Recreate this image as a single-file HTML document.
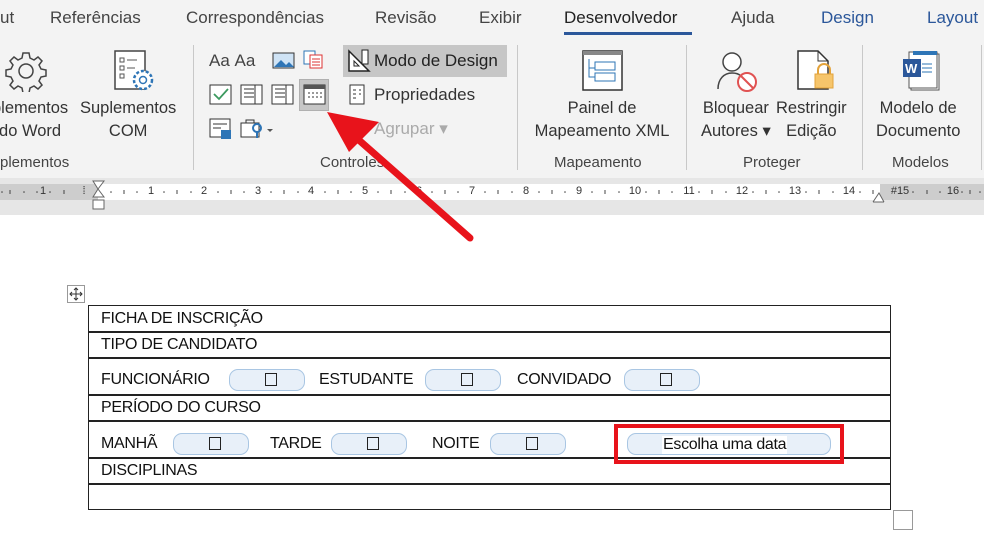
<!DOCTYPE html>
<html><head><meta charset="utf-8"><style>
*{margin:0;padding:0;box-sizing:border-box}
body{width:984px;height:552px;overflow:hidden;background:#fff;position:relative;font-family:"Liberation Sans",sans-serif;color:#333}
.a{position:absolute;white-space:nowrap}
.tab{top:8px;font-size:17px;color:#444}
.rb{font-size:16.5px;color:#333;text-align:center;line-height:23px}
.gl{top:154px;font-size:15px;color:#444}
.sep{position:absolute;top:45px;width:1px;height:125px;background:#c8c8c8}
.tx{font-size:16px;letter-spacing:-0.3px;color:#111}
.cc{position:absolute;height:22px;border:1px solid #a9c6e3;background:#e8f0f9;border-radius:9px}
.bx{position:absolute;width:12px;height:13px;border:1.5px solid #222}
.rn{position:absolute;top:185px;font-size:11px;color:#333;transform:translateX(-50%)}
</style></head><body>
<div class="a" style="left:0;top:0;width:984px;height:180px;background:#f3f3f3"></div>
<div class="a tab" style="left:0">ut</div>
<div class="a tab" style="left:50px">Referências</div>
<div class="a tab" style="left:186px">Correspondências</div>
<div class="a tab" style="left:375px">Revisão</div>
<div class="a tab" style="left:479px">Exibir</div>
<div class="a tab" style="left:564px;color:#222">Desenvolvedor</div>
<div class="a" style="left:564px;top:32px;width:128px;height:3px;background:#2b579a"></div>
<div class="a tab" style="left:731px">Ajuda</div>
<div class="a tab" style="left:821px;color:#2b579a">Design</div>
<div class="a tab" style="left:927px;color:#2b579a">Layout</div>

<svg class="a" style="left:5px;top:50px" width="42" height="42" viewBox="0 0 42 42"><path d="M18 3h6l1 5 4 2 4-3 4 4-3 4 2 4 5 1v6l-5 1-2 4 3 4-4 4-4-3-4 2-1 5h-6l-1-5-4-2-4 3-4-4 3-4-2-4-5-1v-6l5-1 2-4-3-4 4-4 4 3 4-2z" fill="none" stroke="#444" stroke-width="1.5"/><circle cx="21" cy="21" r="7" fill="none" stroke="#444" stroke-width="1.5"/></svg>
<div class="a rb" style="left:-8px;top:97px">plementos<br>do Word</div>
<svg class="a" style="left:113px;top:50px" width="44" height="44"><rect x="2" y="1" width="30" height="38" fill="#fff" stroke="#444" stroke-width="1.5"/><path d="M7 8h4v4H7zM7 16h4v4H7zM7 24h4v4H7zM14 10h10M14 18h8" stroke="#555" fill="none"/><circle cx="30" cy="30" r="9" fill="#fff" stroke="#2e75b6" stroke-width="2.5" stroke-dasharray="3 2"/><circle cx="30" cy="30" r="3.5" fill="none" stroke="#2e75b6" stroke-width="1.5"/></svg>
<div class="a rb" style="left:80px;top:97px">Suplementos<br>COM</div>
<div class="a gl" style="left:0">plementos</div>
<div class="sep" style="left:193px"></div>

<div class="a" style="left:209px;top:51px;font-size:17px;color:#444">Aa&nbsp;Aa</div>
<svg class="a" style="left:272px;top:51px" width="24" height="20"><rect x="1" y="2" width="21" height="15" fill="#cfe3f5" stroke="#333"/><path d="M2 16l7-7 5 5 3-3 5 5" fill="#2e75b6"/></svg>
<svg class="a" style="left:303px;top:50px" width="22" height="22"><rect x="1" y="1" width="11" height="13" fill="#fff" stroke="#2e75b6"/><rect x="7" y="5" width="12" height="13" fill="#fff" stroke="#d33"/><path d="M9 9h8M9 12h8M9 15h8" stroke="#d33"/></svg>
<svg class="a" style="left:209px;top:84px" width="24" height="22"><rect x="1" y="1" width="21" height="19" fill="#fff" stroke="#333"/><path d="M5 10l5 5 9-10" stroke="#3c9a5f" stroke-width="1.8" fill="none"/></svg>
<svg class="a" style="left:240px;top:84px" width="24" height="22"><rect x="1" y="1" width="21" height="19" fill="#fff" stroke="#333"/><path d="M4 5h10M4 9h10M4 13h10M15 1v19" stroke="#333"/></svg>
<svg class="a" style="left:271px;top:84px" width="24" height="22"><rect x="1" y="1" width="21" height="19" fill="#fff" stroke="#333"/><path d="M4 5h10M4 9h10M4 13h10M15 1v19" stroke="#333"/></svg>
<div class="a" style="left:299px;top:79px;width:30px;height:32px;background:#c6c6c6;border:1px solid #b0b0b0"></div>
<svg class="a" style="left:303px;top:84px" width="24" height="22"><rect x="1" y="1" width="21" height="19" fill="#fff" stroke="#333"/><rect x="1" y="1" width="21" height="4" fill="#555"/><path d="M5 9h2M9 9h2M13 9h2M17 9h2M5 13h2M9 13h2M13 13h2M17 13h2" stroke="#333"/></svg>
<svg class="a" style="left:209px;top:118px" width="24" height="22"><rect x="1" y="1" width="20" height="18" fill="#fff" stroke="#333"/><path d="M4 6h14M4 10h8" stroke="#333"/><rect x="12" y="12" width="10" height="9" fill="#2e75b6"/></svg>
<svg class="a" style="left:240px;top:118px" width="36" height="22"><rect x="1" y="5" width="18" height="14" fill="#fff" stroke="#333"/><path d="M6 5V2h8v3" fill="none" stroke="#333"/><circle cx="17" cy="10" r="4" fill="none" stroke="#2e75b6" stroke-width="2"/><path d="M17 13v7" stroke="#2e75b6" stroke-width="2"/><path d="M27 11l3 3 3-3z" fill="#555"/></svg>
<div class="a" style="left:343px;top:45px;width:164px;height:32px;background:#c6c6c6"></div>
<svg class="a" style="left:347px;top:49px" width="24" height="24"><path d="M2 2v20h20z" fill="#fff" stroke="#222" stroke-width="1.5"/><path d="M7 12v5h5z" fill="none" stroke="#222"/><rect x="15" y="1" width="6" height="14" fill="#fff" stroke="#222"/></svg>
<div class="a" style="left:374px;top:51px;font-size:17px;color:#222">Modo de Design</div>
<svg class="a" style="left:349px;top:84px" width="18" height="22"><rect x="1" y="1" width="14" height="19" fill="#fff" stroke="#333"/><path d="M4 6h3M4 10h3M4 14h3M10 6h2M10 10h2" stroke="#333"/></svg>
<div class="a" style="left:374px;top:85px;font-size:17px;color:#333">Propriedades</div>
<div class="a" style="left:374px;top:119px;font-size:17px;color:#aaa">Agrupar ▾</div>
<div class="a gl" style="left:320px">Controles</div>
<div class="sep" style="left:517px"></div>

<svg class="a" style="left:582px;top:50px" width="42" height="42"><rect x="1" y="1" width="39" height="39" fill="#fff" stroke="#333" stroke-width="1.5"/><rect x="1" y="1" width="39" height="4" fill="#888"/><path d="M7 9v18h6M7 18h6" stroke="#2e75b6" fill="none"/><rect x="13" y="12" width="20" height="8" fill="none" stroke="#2e75b6"/><rect x="13" y="23" width="20" height="8" fill="none" stroke="#2e75b6"/></svg>
<div class="a rb" style="left:527px;top:97px;width:150px">Painel de<br>Mapeamento XML</div>
<div class="a gl" style="left:554px">Mapeamento</div>
<div class="sep" style="left:686px"></div>

<svg class="a" style="left:716px;top:50px" width="46" height="44"><circle cx="16" cy="12" r="9" fill="#fff" stroke="#444" stroke-width="1.5"/><path d="M2 39c0-10 6-16 14-16 4 0 7 1 9 3" fill="none" stroke="#444" stroke-width="1.5"/><circle cx="31" cy="32" r="9" fill="#fff" stroke="#e05252" stroke-width="2"/><path d="M25 26l12 12" stroke="#e05252" stroke-width="2"/></svg>
<div class="a rb" style="left:701px;top:97px">Bloquear<br>Autores ▾</div>
<svg class="a" style="left:796px;top:50px" width="42" height="44"><path d="M2 1h20l10 10v28H2z" fill="#fff" stroke="#333" stroke-width="1.5"/><path d="M22 1v10h10" fill="none" stroke="#333"/><path d="M22 24v-4a6 6 0 0112 0v4" fill="none" stroke="#e3a33b" stroke-width="2"/><rect x="19" y="24" width="18" height="14" fill="#f6c56b" stroke="#e3a33b"/></svg>
<div class="a rb" style="left:776px;top:97px">Restringir<br>Edição</div>
<div class="a gl" style="left:743px">Proteger</div>
<div class="sep" style="left:862px"></div>

<svg class="a" style="left:902px;top:50px" width="40" height="44"><rect x="9" y="4" width="28" height="36" fill="#fff" stroke="#555"/><rect x="7" y="2" width="28" height="36" fill="#fff" stroke="#555"/><rect x="11" y="1" width="24" height="4" fill="#2e75b6"/><path d="M20 14h10M20 18h10M20 22h10" stroke="#2e75b6"/><rect x="1" y="9" width="18" height="18" fill="#2b579a"/><text x="3" y="23" font-size="13" font-weight="bold" fill="#fff" font-family="Liberation Sans">W</text></svg>
<div class="a rb" style="left:876px;top:97px">Modelo de<br>Documento</div>
<div class="a gl" style="left:892px">Modelos</div>
<div class="sep" style="left:981px"></div>

<div class="a" style="left:0;top:178px;width:984px;height:37px;background:#e6e6e6"></div>
<div class="a" style="left:0;top:184px;width:984px;height:16px;background:#fff"></div>
<div class="a" style="left:0;top:184px;width:98px;height:16px;background:#cdcdcd"></div>
<div class="a" style="left:880px;top:184px;width:104px;height:16px;background:#cdcdcd"></div>
<svg class="a" style="left:0;top:184px" width="984" height="16">
<g stroke="#444" stroke-width="1">
<path d="M10 6v4M64 6v4M124 6v4M177 6v4M231 6v4M284 6v4M338 6v4M391 6v4M445 6v4M498 6v4M552 6v4M605 6v4M659 6v4M712 6v4M766 6v4M819 6v4M873 6v4M927 6v4M970 6v4"/>
</g>
<g fill="#444">
<circle cx="2" cy="8" r="0.8"/><circle cx="24" cy="8" r="0.8"/><circle cx="37" cy="8" r="0.8"/><circle cx="50" cy="8" r="0.8"/>
<circle cx="111" cy="8" r="0.8"/><circle cx="137" cy="8" r="0.8"/><circle cx="164" cy="8" r="0.8"/><circle cx="191" cy="8" r="0.8"/><circle cx="218" cy="8" r="0.8"/><circle cx="244" cy="8" r="0.8"/><circle cx="271" cy="8" r="0.8"/><circle cx="298" cy="8" r="0.8"/><circle cx="325" cy="8" r="0.8"/><circle cx="351" cy="8" r="0.8"/><circle cx="378" cy="8" r="0.8"/><circle cx="405" cy="8" r="0.8"/><circle cx="432" cy="8" r="0.8"/><circle cx="458" cy="8" r="0.8"/><circle cx="485" cy="8" r="0.8"/><circle cx="512" cy="8" r="0.8"/><circle cx="539" cy="8" r="0.8"/><circle cx="565" cy="8" r="0.8"/><circle cx="592" cy="8" r="0.8"/><circle cx="619" cy="8" r="0.8"/><circle cx="646" cy="8" r="0.8"/><circle cx="672" cy="8" r="0.8"/><circle cx="699" cy="8" r="0.8"/><circle cx="726" cy="8" r="0.8"/><circle cx="753" cy="8" r="0.8"/><circle cx="779" cy="8" r="0.8"/><circle cx="806" cy="8" r="0.8"/><circle cx="833" cy="8" r="0.8"/><circle cx="860" cy="8" r="0.8"/><circle cx="913" cy="8" r="0.8"/><circle cx="940" cy="8" r="0.8"/><circle cx="962" cy="8" r="0.8"/><circle cx="980" cy="8" r="0.8"/>
</g></svg>
<div class="rn" style="left:43px">1</div><div class="rn" style="left:84px">⁞</div>
<div class="rn" style="left:151px">1</div><div class="rn" style="left:204px">2</div><div class="rn" style="left:258px">3</div><div class="rn" style="left:311px">4</div><div class="rn" style="left:365px">5</div><div class="rn" style="left:419px">6</div><div class="rn" style="left:472px">7</div><div class="rn" style="left:526px">8</div><div class="rn" style="left:579px">9</div><div class="rn" style="left:635px">10</div><div class="rn" style="left:689px">11</div><div class="rn" style="left:742px">12</div><div class="rn" style="left:795px">13</div><div class="rn" style="left:849px">14</div><div class="rn" style="left:900px">#15</div><div class="rn" style="left:953px">16</div>
<svg class="a" style="left:92px;top:180px" width="14" height="32"><path d="M1 1h11L6 9zM1 17h11L6 9z" fill="#fff" stroke="#666"/><rect x="1" y="20" width="11" height="9" fill="#fff" stroke="#666"/></svg>
<svg class="a" style="left:872px;top:190px" width="14" height="14"><path d="M1 12h11M1 12L7 3l5 9" fill="#fff" stroke="#666"/></svg>

<svg class="a" style="left:67px;top:285px" width="20" height="20"><rect x="0.5" y="0.5" width="17" height="17" fill="#fff" stroke="#999"/><path d="M9 3v12M3 9h12M7 5l2-2 2 2M7 13l2 2 2-2M5 7l-2 2 2 2M13 7l2 2-2 2" stroke="#333" fill="none"/></svg>
<div class="a" style="left:88px;top:305px;width:803px;height:205px;border:1.5px solid #222"></div>
<div class="a" style="left:88px;top:331px;width:803px;height:1.5px;background:#222"></div>
<div class="a" style="left:88px;top:357px;width:803px;height:1.5px;background:#222"></div>
<div class="a" style="left:88px;top:394px;width:803px;height:1.5px;background:#222"></div>
<div class="a" style="left:88px;top:420px;width:803px;height:1.5px;background:#222"></div>
<div class="a" style="left:88px;top:457px;width:803px;height:1.5px;background:#222"></div>
<div class="a" style="left:88px;top:483px;width:803px;height:1.5px;background:#222"></div>
<div class="a tx" style="left:101px;top:310px">FICHA DE INSCRIÇÃO</div>
<div class="a tx" style="left:101px;top:336px">TIPO DE CANDIDATO</div>
<div class="a tx" style="left:101px;top:371px">FUNCIONÁRIO</div>
<div class="a tx" style="left:319px;top:371px">ESTUDANTE</div>
<div class="a tx" style="left:517px;top:371px">CONVIDADO</div>
<div class="a tx" style="left:101px;top:399px">PERÍODO DO CURSO</div>
<div class="a tx" style="left:101px;top:435px">MANHÃ</div>
<div class="a tx" style="left:270px;top:435px">TARDE</div>
<div class="a tx" style="left:432px;top:435px">NOITE</div>
<div class="a tx" style="left:101px;top:462px">DISCIPLINAS</div>
<div class="cc" style="left:229px;top:369px;width:76px"></div><div class="bx" style="left:265px;top:373px"></div>
<div class="cc" style="left:425px;top:369px;width:76px"></div><div class="bx" style="left:461px;top:373px"></div>
<div class="cc" style="left:624px;top:369px;width:76px"></div><div class="bx" style="left:660px;top:373px"></div>
<div class="cc" style="left:173px;top:433px;width:76px"></div><div class="bx" style="left:209px;top:437px"></div>
<div class="cc" style="left:331px;top:433px;width:76px"></div><div class="bx" style="left:367px;top:437px"></div>
<div class="cc" style="left:490px;top:433px;width:76px"></div><div class="bx" style="left:526px;top:437px"></div>
<div class="cc" style="left:627px;top:433px;width:204px"></div>
<div class="a tx" style="left:662px;top:436px;background:#fff;padding:0 1px">Escolha uma data</div>
<div class="a" style="left:614px;top:424px;width:230px;height:40px;border:4px solid #e8131b"></div>
<div class="a" style="left:893px;top:510px;width:20px;height:20px;border:1px solid #999"></div>

<svg class="a" style="left:0;top:0" width="984" height="552"><path d="M470 238L352 134" stroke="#e8131b" stroke-width="7" stroke-linecap="round"/><path d="M327 112l52 10-30 30z" fill="#e8131b"/></svg>
</body></html>
